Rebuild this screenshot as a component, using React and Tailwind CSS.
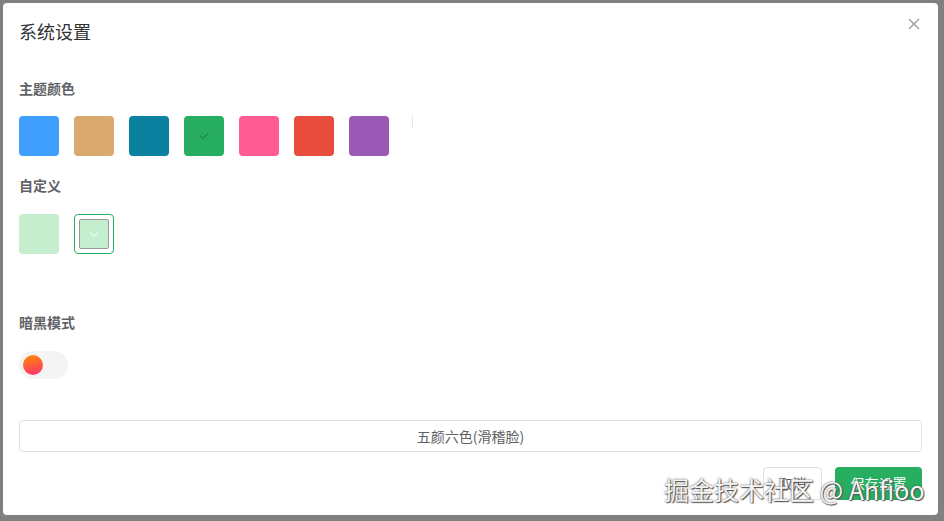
import React, { useState } from 'react';

const themeColors = ['#409eff', '#daa96e', '#0c819f', '#27ae60', '#ff5c93', '#e74c3c', '#9b59b6'];

const CheckIcon = () => (
  <svg width="12" height="12" viewBox="0 0 12 12" fill="none">
    <path d="M2.5 6.2 5 8.5l4.5-4.8" stroke="#1c6b3e" strokeWidth="1" strokeLinecap="round" strokeLinejoin="round" />
  </svg>
);

const ArrowIcon = () => (
  <svg width="12" height="8" viewBox="0 0 12 8" fill="none">
    <path d="M2 3l4 3 4-3" stroke="#ffffff" strokeWidth="1" strokeLinecap="round" strokeLinejoin="round" />
  </svg>
);

const SectionLabel = ({ children, className = '' }) => (
  <div className={`text-[14px] leading-[20px] font-bold text-[#606266] ${className}`}>{children}</div>
);

export default function App() {
  const [active, setActive] = useState('#27ae60');
  const [dark, setDark] = useState(false);

  return (
    <div className="w-[944px] h-[521px] bg-[#808080] pt-[3px] pl-[3px] font-['Noto_Sans_CJK_SC','Noto_Sans',sans-serif] relative overflow-hidden">
      <div className="w-[935px] h-[512px] bg-white rounded-[4px] px-[16px] flex flex-col">
        {/* Header */}
        <div className="flex items-center justify-between pt-[16px]">
          <h2 className="text-[18px] leading-[24px] text-[#303133]">系统设置</h2>
          <button className="text-[#909399] -mt-[14px] mr-[2px]" title="关闭">
            <svg width="12" height="12" viewBox="0 0 12 12">
              <path d="M1 1l10 10M11 1 1 11" stroke="#909399" strokeWidth="1.1" />
            </svg>
          </button>
        </div>

        {/* Theme colors */}
        <SectionLabel className="mt-[35px]">主题颜色</SectionLabel>
        <div className="flex items-start gap-[15px] mt-[18px]">
          {themeColors.map((c) => (
            <button
              key={c}
              onClick={() => setActive(c)}
              className="w-[40px] h-[40px] rounded-[4px] flex items-center justify-center"
              style={{ backgroundColor: c }}
            >
              {active === c && <CheckIcon />}
            </button>
          ))}
          <span className="ml-[8px] w-px h-[13px] bg-[#e4e7ed]" />
        </div>

        {/* Custom colors */}
        <SectionLabel className="mt-[19px]">自定义</SectionLabel>
        <div className="flex gap-[15px] mt-[19px]">
          <div className="w-[40px] h-[40px] rounded-[4px] bg-[#c5eecf]" />
          <div className="w-[40px] h-[40px] rounded-[4px] border border-[#27ae60] p-[4px]">
            <div className="w-full h-full border border-[#999] rounded-[2px] bg-[#c5eecf] flex items-center justify-center">
              <ArrowIcon />
            </div>
          </div>
        </div>

        {/* Dark mode */}
        <SectionLabel className="mt-[58px]">暗黑模式</SectionLabel>
        <button
          onClick={() => setDark(!dark)}
          className="mt-[19px] w-[49px] h-[28px] rounded-full bg-[#f4f4f5] flex items-center px-[4px]"
        >
          <span className="w-[20px] h-[20px] rounded-full bg-[linear-gradient(170deg,#ff8a00,#ff2f72)]" />
        </button>

        {/* Random colors */}
        <button className="mt-[41px] w-full h-[32px] border border-[#dcdfe6] rounded-[4px] text-[14px] leading-[20px] text-[#606266]">
          五颜六色(滑稽脸)
        </button>

        {/* Footer */}
        <div className="flex justify-end gap-[13px] mt-[15px]">
          <button className="w-[59px] h-[33px] border border-[#dcdfe6] rounded-[4px] text-[14px] text-[#606266]">取消</button>
          <button className="w-[87px] h-[33px] rounded-[4px] bg-[#27ae60] text-[14px] text-white">保存设置</button>
        </div>
      </div>

      {/* Watermark */}
      <div className="absolute left-[664px] top-[472px] text-[25px] leading-[34px] text-[#f4f4f4] whitespace-nowrap [text-shadow:0_0_2px_#444,1px_1px_1px_#555] pointer-events-none">
        掘金技术社区 @ Anfioo
      </div>
    </div>
  );
}
